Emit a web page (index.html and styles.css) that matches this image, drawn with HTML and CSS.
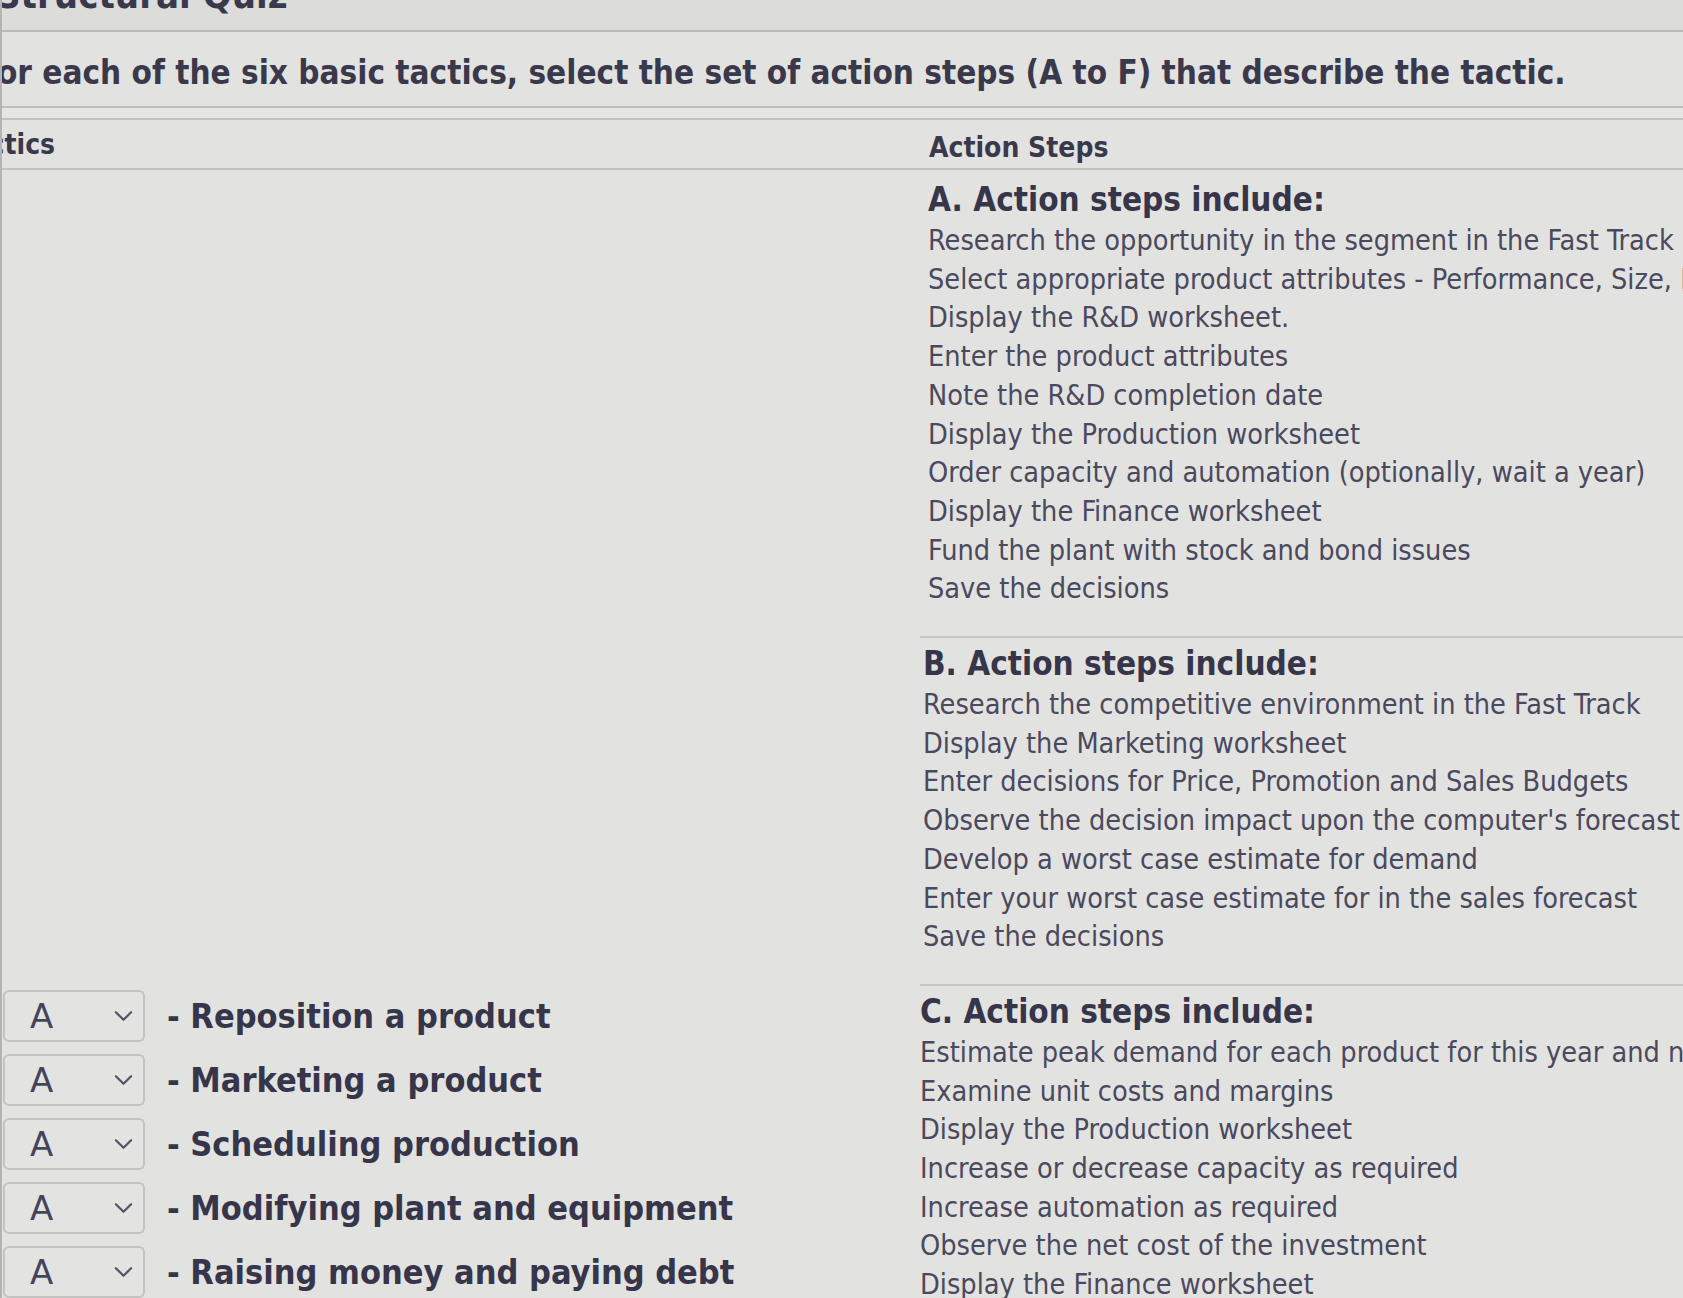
FILE: index.html
```html
<!DOCTYPE html>
<html lang="en">
<head>
<meta charset="utf-8">
<title>Structural Quiz</title>
<link rel="stylesheet" href="styles.css">
</head>
<body>
<div class="page">
  <div class="title-bar"><h1 class="title">Structural Quiz</h1></div>
  <div class="instruction"><p class="instruction-text">For each of the six basic tactics, select the set of action steps (A to F) that describe the tactic.</p></div>
  <div class="spacer"></div>
  <div class="table-head">
    <div class="col-left head-cell">Tactics</div>
    <div class="col-right head-cell">Action Steps</div>
  </div>
  <div class="table-body">
    <div class="col-left tactics">
      <div class="tactic"><div class="select"><span class="select-value">A</span><svg class="chev" viewBox="0 0 20 12"><path d="M2 2 L10 10 L18 2"/></svg></div><span class="tactic-label">- Reposition a product</span></div>
      <div class="tactic"><div class="select"><span class="select-value">A</span><svg class="chev" viewBox="0 0 20 12"><path d="M2 2 L10 10 L18 2"/></svg></div><span class="tactic-label">- Marketing a product</span></div>
      <div class="tactic"><div class="select"><span class="select-value">A</span><svg class="chev" viewBox="0 0 20 12"><path d="M2 2 L10 10 L18 2"/></svg></div><span class="tactic-label">- Scheduling production</span></div>
      <div class="tactic"><div class="select"><span class="select-value">A</span><svg class="chev" viewBox="0 0 20 12"><path d="M2 2 L10 10 L18 2"/></svg></div><span class="tactic-label">- Modifying plant and equipment</span></div>
      <div class="tactic"><div class="select"><span class="select-value">A</span><svg class="chev" viewBox="0 0 20 12"><path d="M2 2 L10 10 L18 2"/></svg></div><span class="tactic-label">- Raising money and paying debt</span></div>
    </div>
    <div class="col-right steps">
      <div class="block block-a">
        <h2 class="block-title">A. Action steps include:</h2>
        <ul class="step-list">
          <li>Research the opportunity in the segment in the Fast Track</li>
          <li>Select appropriate product attributes - Performance, Size, MTBF</li>
          <li>Display the R&amp;D worksheet.</li>
          <li>Enter the product attributes</li>
          <li>Note the R&amp;D completion date</li>
          <li>Display the Production worksheet</li>
          <li>Order capacity and automation (optionally, wait a year)</li>
          <li>Display the Finance worksheet</li>
          <li>Fund the plant with stock and bond issues</li>
          <li>Save the decisions</li>
        </ul>
      </div>
      <div class="block block-b">
        <h2 class="block-title">B. Action steps include:</h2>
        <ul class="step-list">
          <li>Research the competitive environment in the Fast Track</li>
          <li>Display the Marketing worksheet</li>
          <li>Enter decisions for Price, Promotion and Sales Budgets</li>
          <li>Observe the decision impact upon the computer's forecast</li>
          <li>Develop a worst case estimate for demand</li>
          <li>Enter your worst case estimate for in the sales forecast</li>
          <li>Save the decisions</li>
        </ul>
      </div>
      <div class="block block-c">
        <h2 class="block-title">C. Action steps include:</h2>
        <ul class="step-list">
          <li>Estimate peak demand for each product for this year and next year</li>
          <li>Examine unit costs and margins</li>
          <li>Display the Production worksheet</li>
          <li>Increase or decrease capacity as required</li>
          <li>Increase automation as required</li>
          <li>Observe the net cost of the investment</li>
          <li>Display the Finance worksheet</li>
        </ul>
      </div>
    </div>
  </div>
</div>
</body>
</html>
```

FILE: styles.css
```css
html, body {
  margin: 0;
  padding: 0;
  background: #e2e2e0;
}
body {
  font-family: "DejaVu Sans Condensed", "DejaVu Sans", sans-serif;
  color: #3a394c;
}
.page {
  width: 1683px;
  height: 1298px;
  overflow: hidden;
  border-left: 2px solid #b4b4b4;
  box-sizing: border-box;
}
.title-bar {
  height: 32px;
  overflow: hidden;
  border-bottom: 2px solid #b9b9b9;
  box-sizing: border-box;
  background: #dcdcda;
}
.title {
  margin: -24px 0 0 -6px;
  font-size: 38px;
  line-height: 38px;
  font-weight: bold;
  white-space: nowrap;
}
.instruction {
  height: 76px;
  display: flex;
  align-items: center;
  border-bottom: 2px solid #bdbdbd;
  box-sizing: border-box;
  overflow: hidden;
  padding-top: 6px;
}
.instruction-text {
  margin: 0 0 0 -24px;
  font-size: 33px;
  font-weight: bold;
  white-space: nowrap;
}
.spacer {
  height: 10px;
  background: #e6e6e4;
}
.table-head {
  display: flex;
  height: 52px;
  border-top: 2px solid #c2c2c2;
  border-bottom: 2px solid #c2c2c2;
  box-sizing: border-box;
  align-items: center;
}
.col-left {
  width: 918px;
  flex: none;
}
.col-right {
  flex: 1;
  min-width: 0;
}
.head-cell {
  font-size: 28px;
  font-weight: bold;
  white-space: nowrap;
  overflow: hidden;
}
.table-head .col-left {
  text-indent: -43px;
}
.table-head .col-right {
  padding-left: 9px;
  padding-top: 6px;
}
.table-body {
  display: flex;
}
.tactics {
  padding-top: 820px;
  display: flex;
  flex-direction: column;
  gap: 12px;
}
.tactic {
  display: flex;
  align-items: center;
  gap: 22px;
}
.select {
  width: 142px;
  height: 52px;
  margin-left: 1px;
  box-sizing: border-box;
  border: 2px solid #c4c4c2;
  border-radius: 6px;
  background: #e3e3e1;
  display: flex;
  align-items: center;
  justify-content: space-between;
  padding: 0 10px 0 25px;
}
.select-value {
  font-family: "DejaVu Sans", sans-serif;
  font-size: 34px;
  color: #45445a;
}
.chev {
  width: 19px;
  height: 12px;
  fill: none;
  stroke: #55546a;
  stroke-width: 2.4;
  stroke-linecap: round;
  stroke-linejoin: round;
}
.tactic-label {
  font-size: 34px;
  font-weight: bold;
  white-space: nowrap;
  color: #36354a;
}
.steps {
  overflow: hidden;
}
.block {
  padding: 5px 0 28px 3px;
  border-top: 2px solid #c6c6c4;
}
.block-a {
  border-top: none;
  padding-top: 9px;
  padding-left: 8px;
}
.block-c {
  padding-left: 0;
}
.block-title {
  margin: 0;
  font-size: 33px;
  line-height: 42px;
  font-weight: bold;
  white-space: nowrap;
  color: #36354a;
}
.step-list {
  list-style: none;
  margin: 0;
  padding: 0;
}
.step-list li {
  font-size: 28.6px;
  line-height: 38.7px;
  white-space: nowrap;
  color: #4a495d;
}
```
